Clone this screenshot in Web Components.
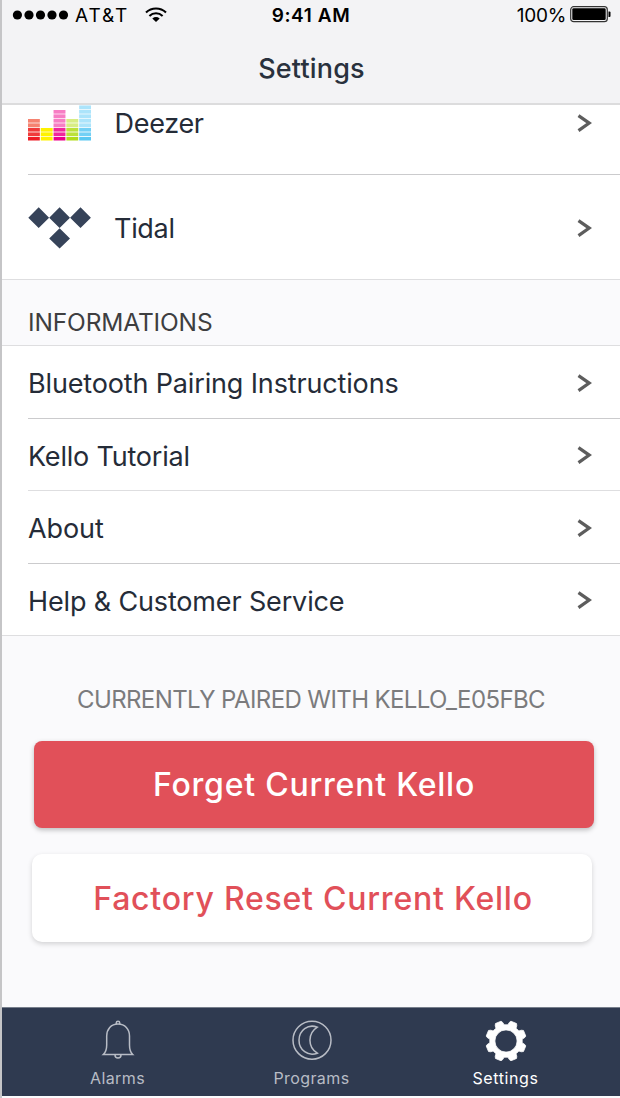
<!DOCTYPE html>
<html lang="en">
<head>
<meta charset="utf-8">
<title>Settings</title>
<style>
html,body{margin:0;height:100%;background:#fafafc}
body{font-family:Inter,"Liberation Sans",sans-serif}
</style>
</head>
<body>
<kello-app>
  <kello-header slot="header" heading="Settings"></kello-header>
  <kello-row tall inset label="Deezer" ls="-0.3"><deezer-logo slot="icon"></deezer-logo></kello-row>
  <kello-row tall label="Tidal" ls="-0.3"><tidal-logo slot="icon"></tidal-logo></kello-row>
  <kello-section>INFORMATIONS</kello-section>
  <kello-row inset label="Bluetooth Pairing Instructions" ls="-0.15"></kello-row>
  <kello-row inset soft label="Kello Tutorial" ls="-0.2"></kello-row>
  <kello-row inset label="About" ls="-0.1"></kello-row>
  <kello-row last label="Help &amp; Customer Service" ls="-0.15"></kello-row>
  <kello-pairing></kello-pairing>
  <kello-tabs slot="footer"></kello-tabs>
</kello-app>
<script>
function define(name, html, setup) {
  customElements.define(name, class extends HTMLElement {
    constructor() {
      super();
      const t = document.createElement('template');
      t.innerHTML = html;
      this.attachShadow({mode: 'open'}).append(t.content.cloneNode(true));
    }
    connectedCallback() { if (setup) setup(this, this.shadowRoot); }
  });
}

define('kello-app', `<style>
:host{display:flex;flex-direction:column;box-sizing:border-box;width:620px;height:1098px;border-left:2px solid #c5c5c7;background:#fafafc;overflow:hidden}
main{flex:1;min-height:0;overflow:hidden;display:flex;flex-direction:column}
.scroll{margin-top:-35px}
</style><slot name="header"></slot><main><div class="scroll"><slot></slot></div></main><slot name="footer"></slot>`);

define('kello-header', `<style>
:host{display:block;height:105px;box-sizing:border-box;background:#f3f3f5;border-bottom:2px solid #dcdcdd;color:#000}
.status{display:grid;grid-template-columns:1fr auto 1fr;height:32px;align-items:center;font-size:19px;line-height:30px}
.left,.right{display:flex;align-items:center}
.right{justify-content:flex-end;padding-right:8px}
.left{padding-left:10px}
svg{display:block}
.dots{margin-top:-1px}
.carrier{margin-left:5px;margin-right:16px;letter-spacing:1.9px}
.wifi{margin-top:-4px}
.time{font-weight:600;letter-spacing:.6px}
.pct{letter-spacing:-.3px;margin-right:4px}
.batt{margin-top:-3px}
.heading{height:73px;display:flex;align-items:center;justify-content:center;font-size:27px;font-weight:500;color:#29313d}
.heading span{letter-spacing:.15px;padding-left:1px}
</style>
<div class="status">
<div class="left"><svg class="dots" width="58" height="12" viewBox="0 0 58 12"><circle cx="5.4" cy="5" r="4.6"/><circle cx="17" cy="5" r="4.6"/><circle cx="28.5" cy="5" r="4.6"/><circle cx="40" cy="5" r="4.6"/><circle cx="51.5" cy="5" r="4.6"/></svg>
<span class="carrier">AT&amp;T</span>
<svg class="wifi" width="22" height="17" viewBox="0 0 22 17" fill="none" stroke="#000" stroke-width="2.1"><path d="M1 6.5A14.5 14.5 0 0 1 21 6.5M4.4 9.9A9.7 9.7 0 0 1 17.6 9.9"/><path d="M7.3 12.4A6 6 0 0 1 14.7 12.4L11 16Z" fill="#000" stroke="none"/></svg></div>
<span class="time">9:41 AM</span>
<div class="right"><span class="pct">100%</span><svg class="batt" width="42" height="17" viewBox="0 0 42 17"><rect x=".7" y=".7" width="36.6" height="15" rx="3" fill="none" stroke="#333" stroke-width="1.2"/><rect x="2.3" y="2.3" width="33.4" height="11.8" rx="1.3"/><path d="M38.5 5.5h1a1 1 0 0 1 1 1v3.5a1 1 0 0 1-1 1h-1z"/></svg></div>
</div>
<div class="heading"><span></span></div>`, (el, r) => { r.querySelector('.heading span').textContent = el.getAttribute('heading'); });

define('kello-row', `<style>
:host{display:block;height:72.5px;background:#fff;box-sizing:border-box;padding-left:26px;border-bottom:1px solid #dedee0;color:#252c38}
:host([tall]){height:105px}
:host([inset]){border-bottom:0}
.row{display:flex;align-items:center;height:100%;box-sizing:border-box;padding-top:3px;padding-right:28px;font-size:27px;white-space:nowrap}
:host([tall]) .row{padding-top:2px}
:host([inset]) .row{border-bottom:1px solid #cbcbcd}
:host([soft]) .row{border-bottom-color:#dedee0}
.label{flex:1}
:host([soft]) .label,:host([last]) .label{padding-top:1.4px}
svg{display:block}
</style><div class="row"><slot name="icon"></slot><span class="label"></span><svg width="15" height="19" viewBox="0 0 15 19"><path d="M1.5 1.6L12.2 9.1L1.5 16.6" fill="none" stroke="#5d5d5d" stroke-width="3.2"/></svg></div>`,
(el, r) => { const l = r.querySelector('.label'); l.textContent = el.getAttribute('label'); l.style.letterSpacing = el.getAttribute('ls') + 'px'; });

define('kello-section', `<style>
:host{display:flex;align-items:flex-end;height:66px;box-sizing:border-box;background:#fafafc;border-bottom:1px solid #dedee0;padding:0 0 7px 26px;font-size:24.5px;line-height:32px;letter-spacing:-.15px;color:#3e3e40}
</style><span><slot></slot></span>`);

define('deezer-logo', `<style>:host{display:block;width:63px;height:36px;margin-right:23.5px}svg{display:block;margin-top:-.5px}</style><svg width="63" height="36" viewBox="0 0 63 36"></svg>`,
(el, r) => {
  const bars = [[5, '#ee1c25', '#f58372'], [3, '#fff200', '#fff200'], [7, '#ec008c', '#f77fc5'], [5, '#b1dc1a', '#d8ed86'], [8, '#5bc8f2', '#ade4fb']];
  let s = '';
  bars.forEach(([n, strong, light], i) => {
    for (let k = 0; k < n; k++)
      s += `<rect x="${i * 12.8}" y="${32 - k * 4.5}" width="11.8" height="3.5" fill="${k < 3 ? strong : light}"/>`;
    s += `<rect x="${i * 12.8}" y="${32 - (n - 1) * 4.5}" width="11.8" height="${(n - 1) * 4.5}" fill="${light}" opacity=".3"/>`;
  });
  r.querySelector('svg').innerHTML = s;
});

define('tidal-logo', `<style>:host{display:block;width:63px;height:42px;margin-right:23px}svg{display:block}</style><svg width="63" height="42" viewBox="0 0 63 42" fill="#364359"><path d="M10.7 .3L21.1 10.7L10.7 21.1L.3 10.7ZM31.6 .3L42 10.7L31.6 21.1L21.2 10.7ZM52.5 .3L62.9 10.7L52.5 21.1L42.1 10.7ZM31.6 21.2L42 31.4L31.6 41.6L21.2 31.4Z"/></svg>`);

define('kello-pairing', `<style>
:host{display:flex;flex-direction:column;padding-top:48px}
.note{text-align:center;font-size:24px;line-height:32px;letter-spacing:-.6px;color:#7b7b7d}
button{font:500 32px Inter,"Liberation Sans",sans-serif;letter-spacing:.77px;border:0;padding:0;border-radius:8px;height:86.5px}
.forget{margin:25px 26.5px 0 31.5px;padding-left:1px;background:#e15059;color:#fff;box-shadow:0 2px 5px rgba(0,0,0,.25)}
.reset{margin:26px 28px 0 30px;height:88px;padding:2px 0 0 2px;border-radius:10px;background:#fff;color:#e15059;box-shadow:0 2px 5px rgba(0,0,0,.16)}
</style><div class="note"><span>CURRENTLY PAIRED WITH KELLO_E05FBC</span></div><button class="forget"><span>Forget Current Kello</span></button><button class="reset"><span>Factory Reset Current Kello</span></button>`);

define('kello-tabs', `<style>
:host{display:flex;height:89px;box-sizing:border-box;border-top:1px solid #777f8c;background:#2f3a50;margin-bottom:2px;padding:0 17.5px 0 18.5px;justify-content:space-between;color:#b8bcc5;font-size:16px;letter-spacing:.4px}
.tab{width:194px;display:flex;flex-direction:column;align-items:center}
.tab svg{display:block;margin-top:11px}
.tab span{line-height:20px;margin-top:7px}
.on{color:#fff}
.on span{letter-spacing:.6px}
</style>
<div class="tab"><svg width="42" height="42" viewBox="0 0 42 42" fill="none" stroke="currentColor" stroke-width="1.5"><path d="M19.3 5.2V3.7Q19.3 2.3 21 2.3T22.7 3.7V5.2M21 5C14 5 9.7 10.3 9.7 17V26C9.7 30 8.5 33.5 6.3 35.6H35.7C33.5 33.5 32.5 30 32.5 26V17C32.5 10.3 28 5 21 5ZM18 36A3 3 0 0 0 24 36"/></svg><span>Alarms</span></div>
<div class="tab"><svg width="42" height="42" viewBox="0 0 42 42" fill="none" stroke="currentColor" stroke-width="1.5"><circle cx="21" cy="21.2" r="19"/><path d="M26.3 8.2C17 4.5 8 11.5 8 21.2S17 37.9 26.3 34.2C16.5 28 16.5 14.5 26.3 8.2Z"/></svg><span>Programs</span></div>
<div class="tab on"><svg class="gear" width="42" height="42" viewBox="0 0 42 42"></svg><span>Settings</span></div>`,
(el, r) => {
  let d = '';
  for (let i = 0; i < 8; i++) {
    const c = (i * 45 + 22.5) * Math.PI / 180;
    [[-.27, 16.3], [-.225, 18.6], [-.15, 20.4], [.15, 20.4], [.225, 18.6], [.27, 16.3]].forEach(([a, q]) => {
      d += (d ? 'L' : 'M') + (21 + q * Math.cos(c + a)).toFixed(2) + ' ' + (22 + q * Math.sin(c + a)).toFixed(2);
    });
  }
  r.querySelector('.gear').innerHTML = `<path fill="currentColor" fill-rule="evenodd" stroke="currentColor" stroke-width=".8" stroke-linejoin="round" d="${d}ZM32.1 22A11.1 11.1 0 1 0 9.9 22A11.1 11.1 0 1 0 32.1 22Z"/>`;
});
</script>
</body>
</html>
